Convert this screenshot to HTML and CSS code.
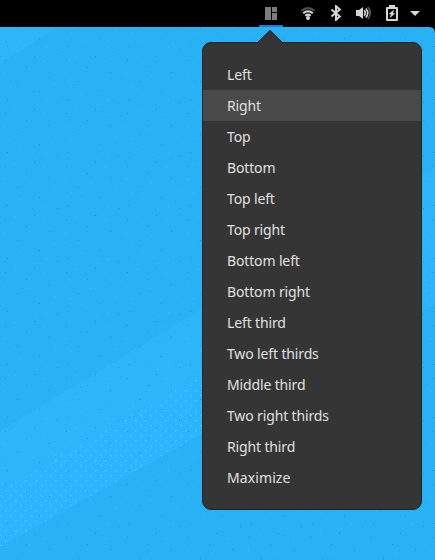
FILE: index.html
```html
<!DOCTYPE html>
<html lang="en">
<head>
<meta charset="utf-8">
<title>Window placement</title>
<link rel="stylesheet" href="styles.css">
</head>
<body>
<svg class="wallpaper" viewBox="0 0 435 560" aria-hidden="true">
  <defs>
    <pattern id="dots" width="10" height="10" patternUnits="userSpaceOnUse">
      <path fill="#3fccff" d="M0 5h2v1H0zM5 0h2v1H5zM5 1h1v1H5zM1 6h1v1H1z"/>
    </pattern>
    <pattern id="grain" width="61" height="53" patternUnits="userSpaceOnUse">
      <path fill="#2593d5" d="M5 7h1v1H5zM34 3h1v1h-1zM49 19h1v1h-1zM17 28h1v1h-1zM39 38h1v1h-1zM7 46h1v1H7zM57 49h1v1h-1zM26 14h1v1h-1z"/>
      <path fill="#35c4f2" d="M15 4h1v1h-1zM44 8h1v1h-1zM29 23h1v1h-1zM4 20h1v1H4zM55 31h1v1h-1zM20 40h1v1h-1zM46 47h1v1h-1zM10 33h1v1h-1zM36 51h1v1h-1z"/>
    </pattern>
    <pattern id="weave" width="10" height="10" patternUnits="userSpaceOnUse">
      <path fill="#2fb8f6" d="M2 3h1v1H2zM7 8h1v1H7z"/>
      <path fill="#26aaee" d="M5 1h1v1H5zM0 6h1v1H0z"/>
    </pattern>
    <linearGradient id="fade" x1="0" y1="0" x2=".28" y2="1">
      <stop offset=".25" stop-color="#fff" stop-opacity=".25"/>
      <stop offset=".6" stop-color="#fff" stop-opacity=".9"/>
    </linearGradient>
    <mask id="dotFade"><path fill="url(#fade)" d="M0 490L435 242V304L0 547z"/></mask>
  </defs>
  <path fill="#28b1f5" d="M0 0h435v560H0z"/>
  <path fill="#2cb5f8" d="M0 0h100L58 27L0 64zM0 431L435 167V242L0 490z"/>
  <path fill="#2db4ff" d="M0 490L435 242V304L0 547z"/>
  <path fill="url(#weave)" opacity=".6" d="M0 0h435v560H0z"/>
  <path fill="url(#grain)" d="M0 0h435v560H0z"/>
  <path fill="url(#dots)" mask="url(#dotFade)" d="M0 490L435 242V304L0 547z"/>
</svg>
<header class="topbar">
  <div class="tiling">
    <svg width="24" height="27" viewBox="0 0 24 27"><path fill="#7c7c7c" d="M6 7h6v13H6zM13 7h5v5h-5zM13 13h5v7h-5z"/></svg>
  </div>
  <div class="status">
    <svg width="16" height="16" viewBox="0 0 16 16" fill="none" stroke-width="2">
      <path stroke="#4c4c4c" d="M1.3 6Q8 .3 14.7 6"/>
      <path stroke="#d6d6d6" d="M3.2 8.3Q8 4.2 12.8 8.3"/>
      <path stroke="#d6d6d6" d="M5.3 10.8Q8 8.5 10.7 10.8"/>
      <circle cx="8" cy="13" r="2" fill="#d6d6d6"/>
    </svg>
    <svg width="16" height="16" viewBox="0 0 16 16" fill="none" stroke="#d6d6d6" stroke-width="2"><path d="M3.5 4.5l8.3 7L8 14.8V1.2l3.8 3.3-8.3 7"/></svg>
    <svg width="16" height="16" viewBox="0 0 16 16" fill="none" stroke="#d6d6d6" stroke-width="1.6">
      <path fill="#d6d6d6" stroke="none" d="M0 5h3L7 2v12l-4-3H0z"/>
      <path d="M8.200 5.300q2.300 2.700 0 5.400"/>
      <path d="M9.800 3.500q4 4.500 0 9"/>
      <path stroke="#585858" d="M11.800 2q5 6 0 12"/>
    </svg>
    <svg width="16" height="16" viewBox="0 0 16 16"><path fill="#d6d6d6" fill-rule="evenodd" d="M5 0h6v2h2q1 0 1 1v12q0 1-1 1H3q-1 0-1-1V3q0-1 1-1h2zM4 4v10h8V4zM10 4.500L4.500 9.200H7L5.500 13.200 11.500 8.200H9z"/></svg>
    <svg class="caret" width="10" height="5" viewBox="0 0 10 5"><path fill="#d6d6d6" d="M0 0h10L5 5z"/></svg>
  </div>
</header>
<svg class="corner" width="6" height="6" viewBox="0 0 6 6" aria-hidden="true"><path d="M0 0h6v6Q6 0 0 0z"/></svg>
<nav class="menu">
  <svg class="arrow" width="26" height="14" viewBox="0 0 26 14"><path fill="#353535" d="M0 14V13L13 0 26 13V14z"/><path fill="none" stroke="#202326" d="M0 13L13 .5 26 13"/></svg>
  <ul class="items">
    <li>Left</li>
    <li class="active">Right</li>
    <li>Top</li>
    <li>Bottom</li>
    <li>Top left</li>
    <li>Top right</li>
    <li>Bottom left</li>
    <li>Bottom right</li>
    <li>Left third</li>
    <li>Two left thirds</li>
    <li>Middle third</li>
    <li>Two right thirds</li>
    <li>Right third</li>
    <li class="wide">Maximize</li>
  </ul>
</nav>
</body>
</html>
```
FILE: styles.css
```css
* { box-sizing: border-box; }
body {
  margin: 0;
  width: 435px;
  height: 560px;
  overflow: hidden;
  position: relative;
  font-family: "Noto Sans", "Open Sans", sans-serif;
}
svg { display: block; flex: none; }
.wallpaper {
  position: absolute;
  inset: 0;
  width: 435px;
  height: 560px;
}
.topbar {
  position: relative;
  display: flex;
  justify-content: flex-end;
  height: 27px;
  padding-right: 15px;
  background: #000;
}
.tiling {
  width: 24px;
  height: 27px;
  margin-right: 17px;
  box-shadow: inset 0 -2px #2b75d6;
}
.status {
  display: flex;
  align-items: center;
  gap: 12px;
  height: 26px;
}
.caret { margin-left: -2px; }
.corner {
  position: absolute;
  top: 27px;
  right: 0;
}
.menu {
  position: absolute;
  top: 42px;
  left: 202px;
  width: 220px;
  height: 468px;
  padding: 16px 0;
  background: #353535;
  border: 1px solid #202326;
  border-radius: 9px;
}
.arrow {
  position: absolute;
  top: -13px;
  left: 54px;
}
.items {
  margin: 0;
  padding: 0;
  list-style: none;
}
.items li {
  height: 31px;
  padding-left: 24px;
  font-size: 14px;
  line-height: 31px;
  letter-spacing: -0.14px;
  color: #e0e0e0;
}
.items .wide { letter-spacing: 0.1px; }
.items .active { background: #4a4a4a; }
```
